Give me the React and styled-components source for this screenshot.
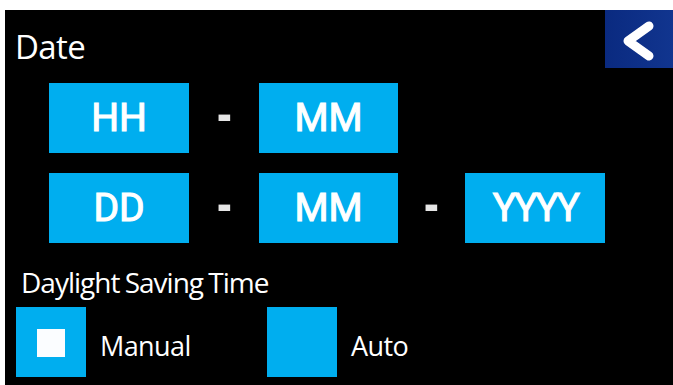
import React from "react";
import styled, { createGlobalStyle } from "styled-components";

const Global = createGlobalStyle`
  html, body { margin: 0; padding: 0; background: #ffffff; }
  body { padding: 10px 0 0 5px; font-family: "Open Sans", "Noto Sans", sans-serif; }
`;

const Panel = styled.div`
  width: 668px;
  height: 375px;
  background: #000;
  color: #fff;
  display: flex;
  flex-direction: column;
  box-sizing: border-box;
`;

const Header = styled.header`
  display: flex;
  justify-content: space-between;
  align-items: flex-start;
  height: 58px;
`;

const Title = styled.h1`
  margin: 0;
  padding: 20px 0 0 10px;
  font-family: "Open Sans", sans-serif;
  font-weight: 400;
  font-size: 33px;
  line-height: 33px;
  letter-spacing: -0.6px;
`;

const BackButton = styled.button`
  width: 68px;
  height: 58px;
  border: none;
  padding: 0;
  background: linear-gradient(90deg, #0a2a80 0%, #11358f 100%);
  display: flex;
  align-items: center;
  justify-content: center;
  cursor: pointer;
`;

const FieldGrid = styled.div`
  margin: 15px 0 0 44px;
  display: grid;
  grid-template-columns: 140px 70px 139px 67px 140px;
  grid-auto-rows: 70px;
  row-gap: 20px;
`;

const Field = styled.div`
  background: #00aeef;
  display: flex;
  align-items: center;
  justify-content: center;
  font-family: Roboto, "Liberation Sans", sans-serif;
  font-weight: 400;
  font-size: 39px;
  line-height: 1;
  letter-spacing: ${(p) => (p.$tight ? "-2.5px" : "0")};
  -webkit-text-stroke: 1.1px #fff;
  color: #fff;
`;

const Sep = styled.div`
  display: flex;
  align-items: center;
  justify-content: center;
  padding-bottom: 6px;
  font-family: Roboto, sans-serif;
  font-weight: 700;
  font-size: 38px;
  line-height: 1;
  color: #e6e6e6;
  & > span { display: inline-block; transform: scale(1.1, 1.5); }
`;

const SectionLabel = styled.div`
  margin: 24px 0 0 16px;
  font-family: "Open Sans", sans-serif;
  font-size: 28px;
  line-height: 31px;
  letter-spacing: -1px;
  word-spacing: -1px;
`;

const OptionRow = styled.div`
  margin: 9px 0 0 11px;
  display: flex;
  align-items: center;
`;

const Option = styled.label`
  display: flex;
  align-items: center;
  gap: 14px;
  width: ${(p) => p.$width || "auto"};
  cursor: pointer;
`;

const Box = styled.span`
  width: 70px;
  height: 70px;
  background: #00aeef;
  display: flex;
  align-items: center;
  justify-content: center;
`;

const Mark = styled.span`
  width: 28px;
  height: 28px;
  background: #fbfdff;
  margin-top: 2px;
`;

const OptionText = styled.span`
  padding-top: 6px;
  font-family: "Open Sans", sans-serif;
  font-size: 27px;
  letter-spacing: -0.6px;
`;

export default function App() {
  return (
    <>
      <Global />
      <Panel>
        <Header>
          <Title>Date</Title>
          <BackButton aria-label="Back">
            <svg width="68" height="58" viewBox="0 0 68 58">
              <path d="M44 16 L23 31 L44 46" fill="none" stroke="#fff" strokeWidth="9" strokeLinecap="round" strokeLinejoin="round" />
            </svg>
          </BackButton>
        </Header>
        <FieldGrid>
          <Field>HH</Field>
          <Sep><span>-</span></Sep>
          <Field>MM</Field>
          <div />
          <div />
          <Field>DD</Field>
          <Sep><span>-</span></Sep>
          <Field>MM</Field>
          <Sep><span>-</span></Sep>
          <Field $tight>YYYY</Field>
        </FieldGrid>
        <SectionLabel>Daylight Saving Time</SectionLabel>
        <OptionRow>
          <Option $width="251px">
            <Box><Mark /></Box>
            <OptionText>Manual</OptionText>
          </Option>
          <Option>
            <Box />
            <OptionText>Auto</OptionText>
          </Option>
        </OptionRow>
      </Panel>
    </>
  );
}
